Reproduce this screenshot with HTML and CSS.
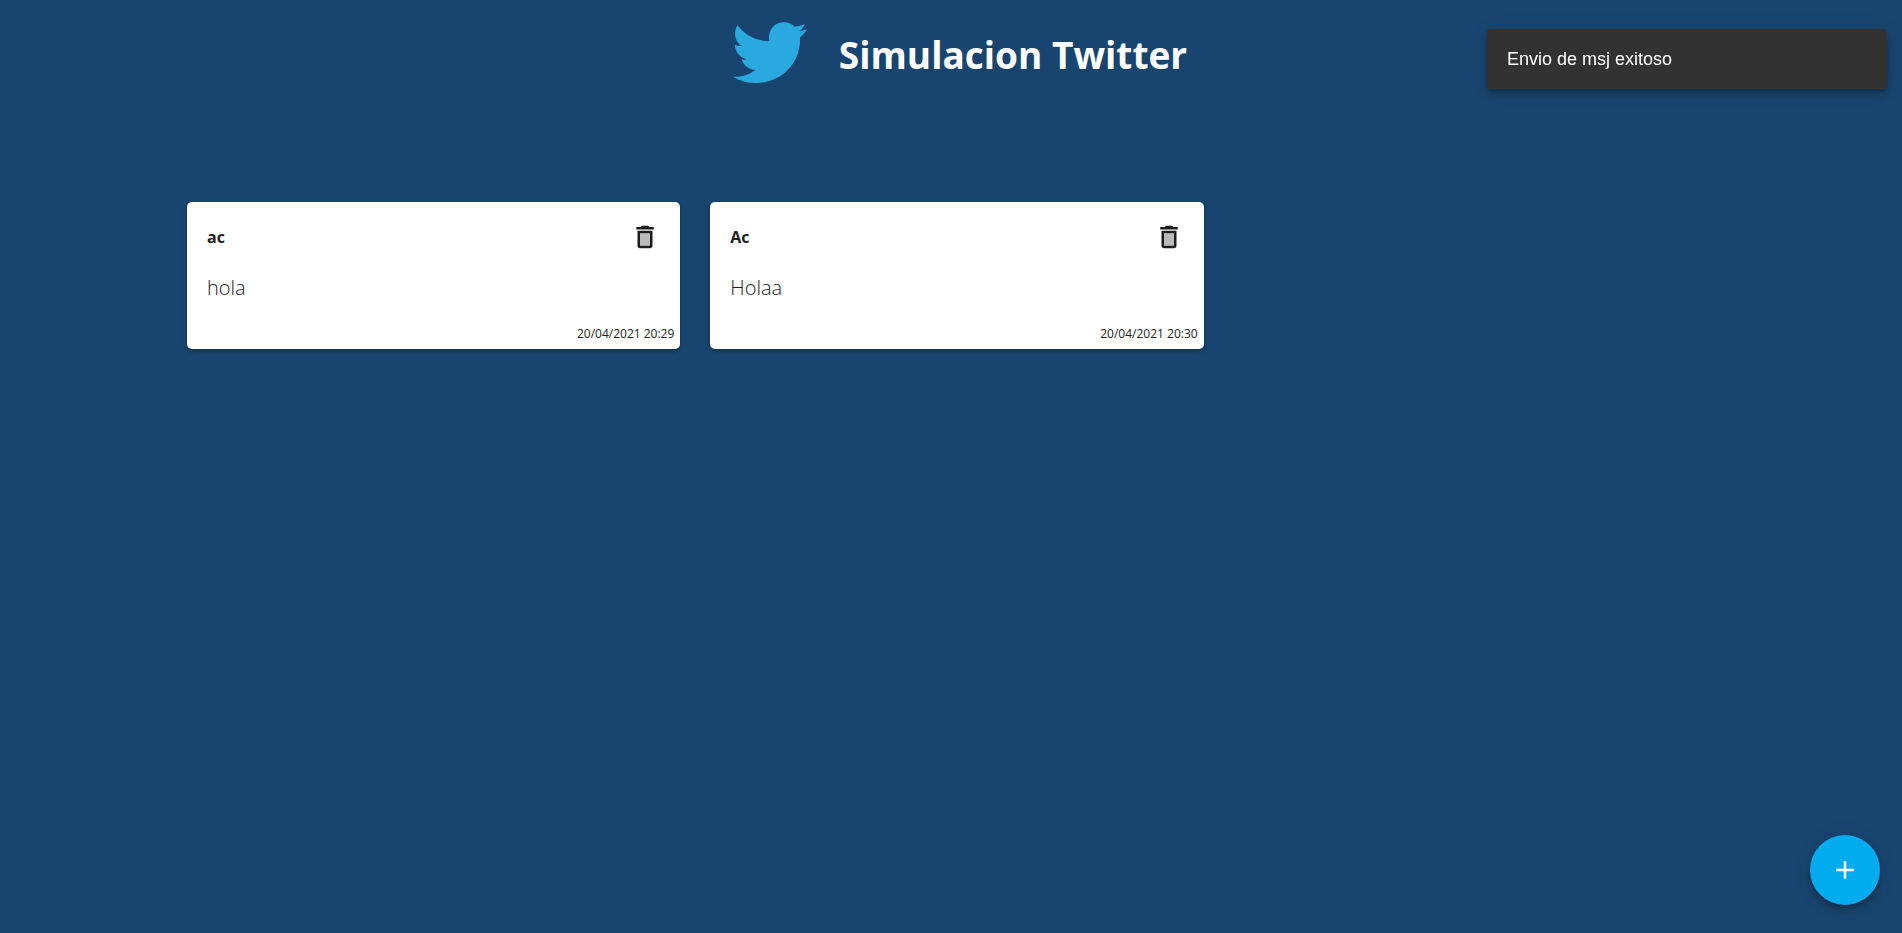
FILE: index.html
```html
<!DOCTYPE html>
<html lang="es">
<head>
<meta charset="utf-8">
<title>Simulacion Twitter</title>
<link rel="stylesheet" href="styles.css">
</head>
<body>
<header class="header">
  <svg class="logo" viewBox="36 35 222 184" aria-hidden="true"><path d="M49 45C72 75 106 92 145 93C139 62 158 36 189 36C202 36 213 41 221 49C232 48 242 45 251 41C248 50 243 57 235 62C243 62 251 60 258 57C253 66 246 74 237 81C241 150 188 218 105 218C79 218 56 211 36 199C61 201 84 194 103 179C83 178 68 165 62 147C67 149 73 148 78 147C56 141 42 125 42 103C48 106 55 108 62 107C41 92 37 67 49 45Z"/></svg>
  <h1 class="title">Simulacion Twitter</h1>
</header>
<main class="grid">
  <article class="card">
    <div class="card-head">
      <h2 class="author">ac</h2>
      <button class="delete" type="button" aria-label="Eliminar"><svg class="icon" viewBox="0 0 24 24"><path d="M8 9h8v10H8z" opacity=".3"/><path d="M15.5 4l-1-1h-5l-1 1H5v2h14V4zM6 19c0 1.1.9 2 2 2h8c1.1 0 2-.9 2-2V7H6v12zM8 9h8v10H8V9z"/></svg></button>
    </div>
    <p class="message">hola</p>
    <time class="date">20/04/2021 20:29</time>
  </article>
  <article class="card">
    <div class="card-head">
      <h2 class="author">Ac</h2>
      <button class="delete" type="button" aria-label="Eliminar"><svg class="icon" viewBox="0 0 24 24"><path d="M8 9h8v10H8z" opacity=".3"/><path d="M15.5 4l-1-1h-5l-1 1H5v2h14V4zM6 19c0 1.1.9 2 2 2h8c1.1 0 2-.9 2-2V7H6v12zM8 9h8v10H8V9z"/></svg></button>
    </div>
    <p class="message">Holaa</p>
    <time class="date">20/04/2021 20:30</time>
  </article>
</main>
<div class="toast" role="status">Envio de msj exitoso</div>
<button class="fab" type="button" aria-label="Agregar"><svg class="icon" viewBox="0 0 24 24"><path d="M19 13h-6v6h-2v-6H5v-2h6V5h2v6h6v2z"/></svg></button>
</body>
</html>
```
FILE: styles.css
```css
* { box-sizing: border-box; }
body {
  margin: 0;
  min-height: 100vh;
  background: #18456f;
  color: #212121;
  font-family: "Segoe UI", "Open Sans", sans-serif;
}
.header {
  display: flex;
  justify-content: center;
  align-items: center;
  gap: 32px;
  height: 106px;
  padding-left: 18px;
}
.logo {
  width: 74px;
  fill: #2aa9e0;
}
.title {
  margin: 4px 0 0;
  color: #fff;
  font-size: 37px;
  line-height: 54px;
  font-weight: 700;
}
.grid {
  display: grid;
  grid-template-columns: repeat(3, 1fr);
  gap: 30px;
  padding: 96px 175px 30px 187px;
}
.card {
  display: flex;
  flex-direction: column;
  padding: 20px 6px 4px 20px;
  border-radius: 5px;
  background: #fff;
  box-shadow: 0 2px 4px rgba(0, 0, 0, .3);
}
.card-head {
  display: flex;
  justify-content: space-between;
  align-items: center;
  padding-right: 14px;
}
.author {
  margin: 0;
  font-size: 16px;
  line-height: 30px;
}
.delete {
  display: flex;
  padding: 0;
  border: 0;
  background: none;
  color: #1c1c1c;
  cursor: pointer;
}
.icon {
  width: 30px;
  height: 30px;
  fill: currentColor;
}
.message {
  margin: 20px 0;
  font-size: 20px;
  line-height: 31px;
  font-weight: 300;
}
.date {
  align-self: flex-end;
  font-size: 12px;
  line-height: 22px;
  font-weight: 400;
}
.toast {
  position: fixed;
  top: 29px;
  right: 15px;
  width: 400px;
  padding: 20px;
  border-radius: 4px;
  background: #323232;
  color: #fff;
  font: 18px/20px "Liberation Sans", Arial, sans-serif;
  box-shadow: 0 3px 5px -1px rgba(0, 0, 0, .2), 0 6px 10px rgba(0, 0, 0, .14), 0 1px 18px rgba(0, 0, 0, .12);
}
.fab {
  position: fixed;
  right: 22px;
  bottom: 28px;
  display: flex;
  align-items: center;
  justify-content: center;
  width: 70px;
  height: 70px;
  padding: 0;
  border: 0;
  border-radius: 50%;
  background: #00acee;
  color: #fff;
  cursor: pointer;
  box-shadow: 0 3px 5px -1px rgba(0, 0, 0, .2), 0 6px 10px rgba(0, 0, 0, .14), 0 1px 18px rgba(0, 0, 0, .12);
}
```
